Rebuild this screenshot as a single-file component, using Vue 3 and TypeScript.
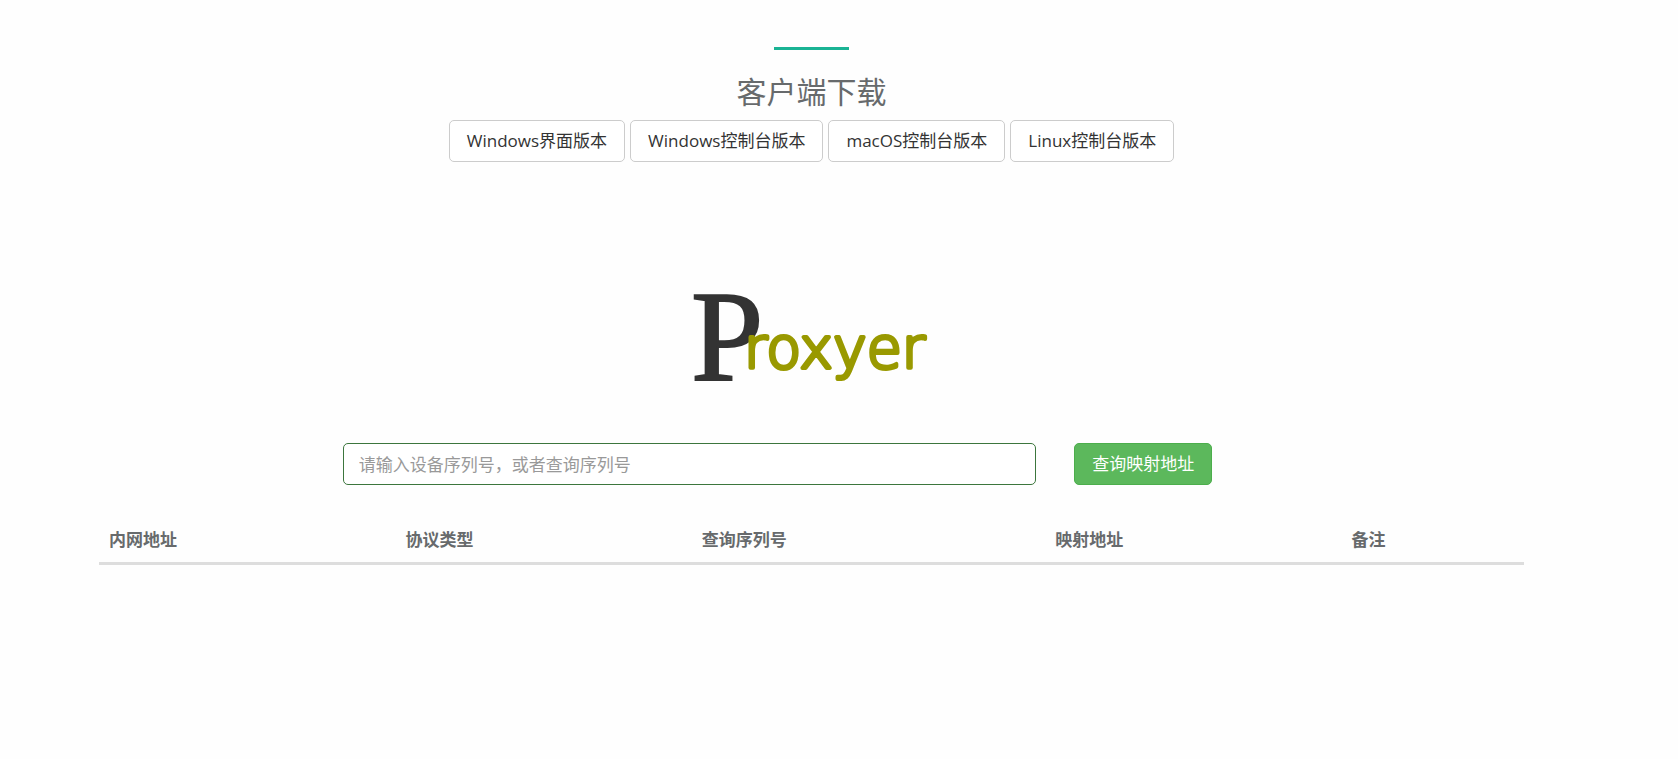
<script setup lang="ts">
import { ref } from 'vue'

const downloads: string[] = ['Windows界面版本', 'Windows控制台版本', 'macOS控制台版本', 'Linux控制台版本']
const columns: string[] = ['内网地址', '协议类型', '查询序列号', '映射地址', '备注']
const serial = ref('')
</script>

<template>
  <main class="page">
    <section class="download">
      <hr class="rule" />
      <h2 class="title">客户端下载</h2>
      <nav class="links">
        <a v-for="name in downloads" :key="name" class="link" href="#">{{ name }}</a>
      </nav>
    </section>

    <svg class="logo" width="260" height="160" viewBox="0 0 260 160" role="img" aria-label="Proxyer">
      <text class="logo-p" x="9" y="120">P</text>
      <text class="logo-rest" x="62" y="108">roxyer</text>
    </svg>

    <form class="query" @submit.prevent>
      <input v-model="serial" class="serial" type="text" aria-label="序列号" placeholder="请输入设备序列号，或者查询序列号" />
      <button class="submit" type="submit">查询映射地址</button>
    </form>

    <table class="mappings">
      <colgroup>
        <col class="col-normal" />
        <col class="col-normal" />
        <col class="col-wide" />
        <col class="col-normal" />
        <col />
      </colgroup>
      <thead>
        <tr>
          <th v-for="name in columns" :key="name" scope="col">{{ name }}</th>
        </tr>
      </thead>
    </table>
  </main>
</template>

<style>
body {
  margin: 0;
  background: #fefefe;
}
</style>

<style scoped>
.page {
  box-sizing: border-box;
  padding: 47px 154px 40px 99px;
  font-family: "Open Sans", "Noto Sans CJK SC", sans-serif;
  font-size: 17px;
  line-height: 24px;
  color: #676a6c;
}
.page * {
  box-sizing: border-box;
}
.download {
  display: flex;
  flex-direction: column;
  align-items: center;
}
.rule {
  width: 75px;
  height: 3px;
  margin: 0;
  border: 0;
  background: #1ab394;
}
.title {
  margin: 24px 0 10px;
  font-size: 30px;
  font-weight: 400;
  line-height: 36px;
}
.links {
  display: flex;
  flex-wrap: wrap;
  justify-content: center;
  gap: 5px;
}
.link {
  padding: 8px 17px;
  border: 1px solid #ccc;
  border-radius: 5px;
  background: #fff;
  color: #333;
  text-decoration: none;
}
.logo {
  display: block;
  margin: 98px auto 23px;
}
.logo-p {
  font-family: "Liberation Serif", serif;
  font-size: 130px;
  fill: #333;
  stroke: #333;
  stroke-width: 2;
}
.logo-rest {
  font-family: "DejaVu Sans", sans-serif;
  font-size: 57px;
  font-weight: 200;
  fill: #999900;
  stroke: #999900;
  stroke-width: 4;
  stroke-linejoin: round;
}
.query {
  display: grid;
  grid-template-columns: 2fr 6fr 4fr;
  margin: 0 -19px;
}
.serial {
  grid-column: 2;
  height: 42px;
  margin: 0 19px;
  padding: 8px 15px;
  border: 1px solid #3c763d;
  border-radius: 5px;
  background: #fff;
  color: #555;
  font: inherit;
}
.serial::placeholder {
  color: #999;
  opacity: 1;
}
.submit {
  justify-self: start;
  height: 42px;
  margin: 0 19px;
  padding: 8px 17px;
  border: 1px solid #4cae4c;
  border-radius: 5px;
  background: #5cb85c;
  color: #fff;
  font: inherit;
}
.mappings {
  width: 100%;
  margin-top: 33px;
  border-collapse: collapse;
  table-layout: fixed;
}
.col-normal {
  width: 20.8%;
}
.col-wide {
  width: 24.8%;
}
.mappings th {
  padding: 10px;
  border-bottom: 3px solid #ddd;
  text-align: left;
  font-weight: 700;
}
</style>
